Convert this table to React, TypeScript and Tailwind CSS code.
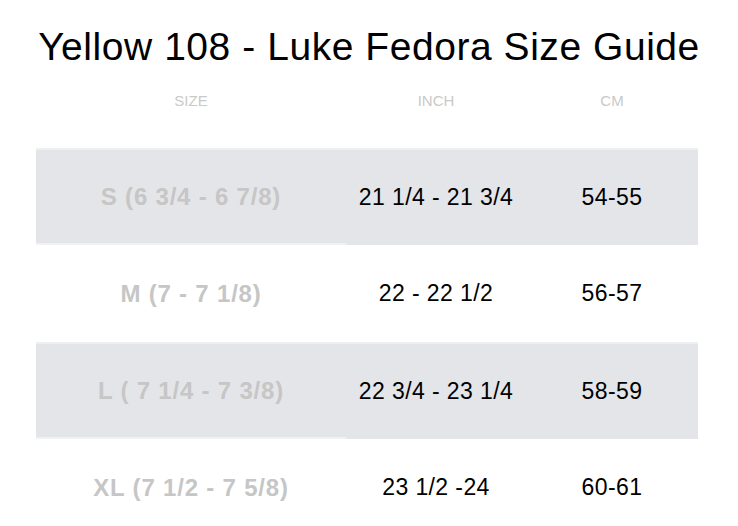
import React from "react";

const rows = [
  { size: "S (6 3/4 - 6 7/8)", inch: "21 1/4 - 21 3/4", cm: "54-55", shaded: true },
  { size: "M (7 - 7 1/8)", inch: "22 - 22 1/2", cm: "56-57", shaded: false },
  { size: "L ( 7 1/4 - 7 3/8)", inch: "22 3/4 - 23 1/4", cm: "58-59", shaded: true },
  { size: "XL (7 1/2 - 7 5/8)", inch: "23 1/2 -24", cm: "60-61", shaded: false },
];

export default function App() {
  return (
    <div
      className="w-[738px] h-[526px] bg-white overflow-hidden"
      style={{ fontFamily: '"Liberation Sans", Arial, sans-serif' }}
    >
      <h1 className="pt-[24px] text-center text-[39px] leading-[46px] text-black tracking-[0.55px]">
        Yellow 108 - Luke Fedora Size Guide
      </h1>
      <div className="flex mx-[36px] w-[662px] mt-[22px] text-[15px] leading-[18px] text-[#c9c9c9]">
        <div className="w-[310px] text-center">SIZE</div>
        <div className="w-[180px] text-center">INCH</div>
        <div className="w-[172px] text-center">CM</div>
      </div>
      <div className="mt-[38px] mx-[36px] w-[662px] flex flex-col">
        {rows.map((r, i) => (
          <div
            key={i}
            className={`flex h-[97px] items-center ${
              r.shaded ? "bg-[#e4e5e8] border-t-2 border-t-[#eeeff0]" : "bg-white"
            }`}
          >
            <div
              className={`w-[310px] h-full flex items-center justify-center text-[24px] tracking-[0.8px] font-bold text-[#c6c6c6] ${
                r.shaded ? "border-b-2 border-b-[#f0f1f2]" : ""
              }`}
            >
              {r.size}
            </div>
            <div className="w-[180px] text-center text-[23px] tracking-[0.4px] text-black">{r.inch}</div>
            <div className="w-[172px] text-center text-[23px] tracking-[0.4px] text-black">{r.cm}</div>
          </div>
        ))}
      </div>
    </div>
  );
}
